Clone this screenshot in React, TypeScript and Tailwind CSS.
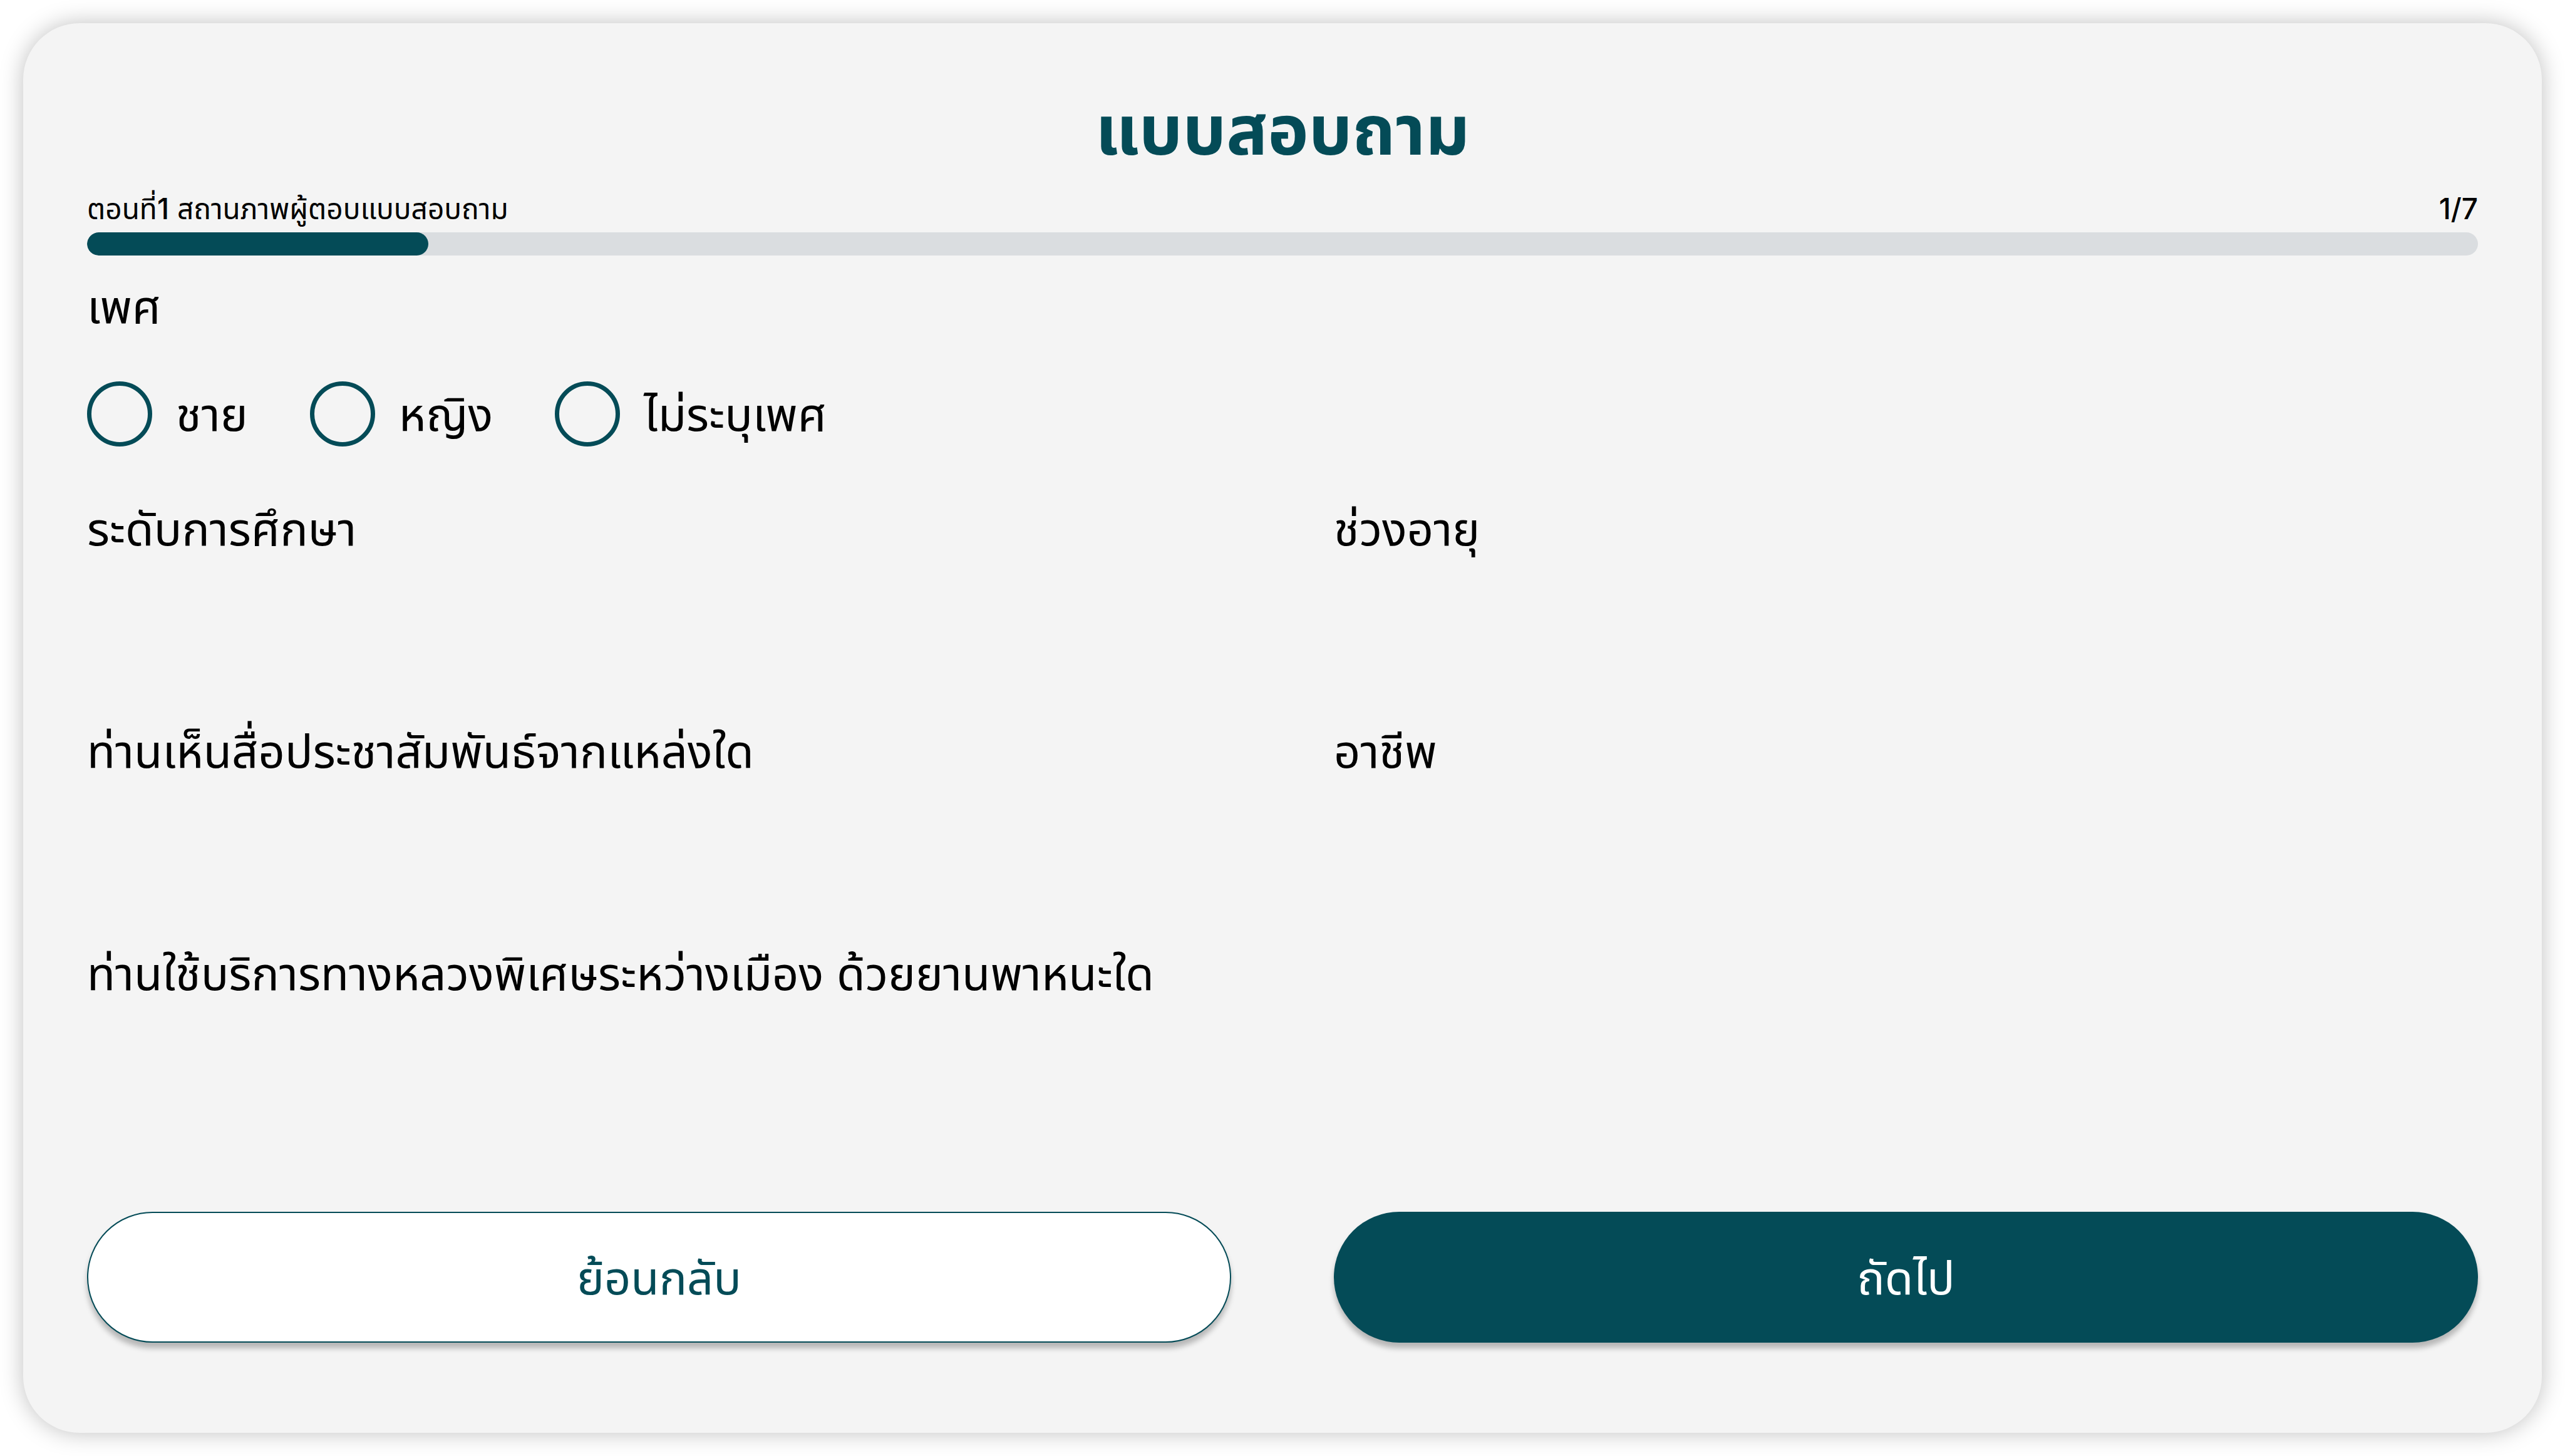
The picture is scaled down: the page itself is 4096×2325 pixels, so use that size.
const label = "text-[74px] leading-[104px] font-normal text-black";

function Choice({ id, text }: { id: string; text: string }) {
  return (
    <label htmlFor={id} className="flex items-center gap-[38px]">
      <input
        id={id}
        type="radio"
        name="gender"
        className="size-[104px] shrink-0 appearance-none rounded-full border-[7px] border-[#044b57] checked:bg-[#044b57]"
      />
      <span className={label}>{text}</span>
    </label>
  );
}

export default function App() {
  return (
    <div className="flex min-h-screen flex-col bg-white p-[37px] font-['Inter','Noto_Sans_Thai','Noto_Sans',sans-serif] [font-optical-sizing:none]">
      <main className="flex flex-1 flex-col rounded-[90px] bg-[#f4f4f4] px-[102px] pt-[95px] pb-[144px] shadow-[0_0_37px_rgba(0,0,0,0.25)]">
        <h1 className="text-center text-[110px] leading-[150px] font-bold text-[#044b57]">แบบสอบถาม</h1>
        <div className="mt-[20px] flex justify-between text-[46px] leading-[62px] text-black">
          <span>
            ตอนที่<span className="font-medium">1</span> สถานภาพผู้ตอบแบบสอบถาม
          </span>
          <span className="font-medium">1/7</span>
        </div>
        <div className="mt-[7px] h-[37px] overflow-hidden rounded-full bg-[#dadde0]">
          <div className="h-full w-1/7 rounded-full bg-[#044b57]" />
        </div>
        <fieldset className="mt-[29px]">
          <legend className={label}>เพศ</legend>
          <div className="mt-[68px] flex gap-[99px]">
            <Choice id="male" text="ชาย" />
            <Choice id="female" text="หญิง" />
            <Choice id="unspecified" text="ไม่ระบุเพศ" />
          </div>
        </fieldset>
        <div className="mt-[79px] grid grid-cols-2 gap-x-[164px] gap-y-[251px]">
          <h2 className={label}>ระดับการศึกษา</h2>
          <h2 className={label}>ช่วงอายุ</h2>
          <h2 className={label}>ท่านเห็นสื่อประชาสัมพันธ์จากแหล่งใด</h2>
          <h2 className={label}>อาชีพ</h2>
          <h2 className={label}>ท่านใช้บริการทางหลวงพิเศษระหว่างเมือง ด้วยยานพาหนะใด</h2>
        </div>
        <div className="mt-auto grid grid-cols-2 gap-x-[164px] text-[74px] leading-[104px]">
          <button type="button" className="h-[209px] rounded-full border-2 border-[#044b57] bg-white text-[#044b57] shadow-[0_9px_9px_rgba(0,0,0,0.25)]">ย้อนกลับ</button>
          <button type="button" className="h-[209px] rounded-full bg-[#044b57] text-white shadow-[0_9px_9px_rgba(0,0,0,0.25)]">ถัดไป</button>
        </div>
      </main>
    </div>
  );
}
